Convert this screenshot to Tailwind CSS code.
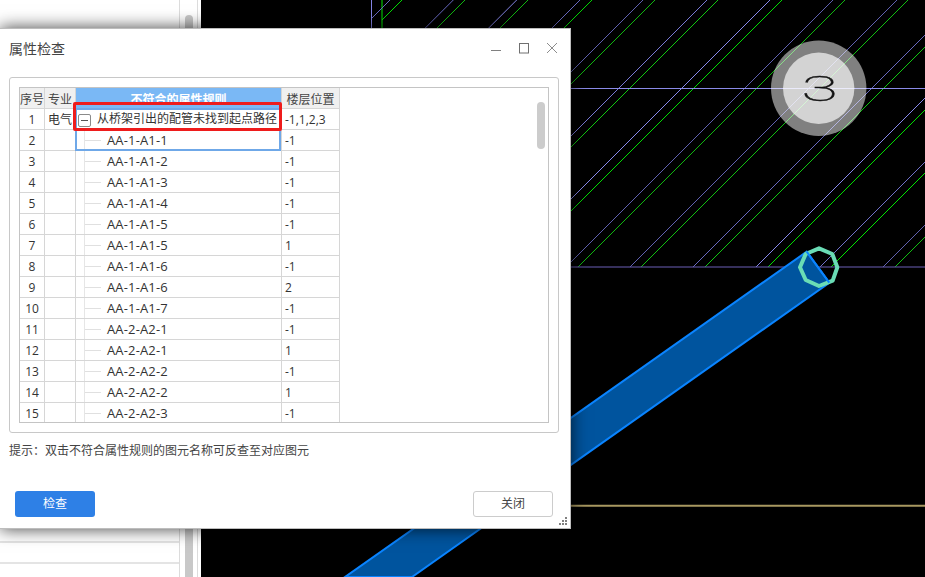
<!DOCTYPE html>
<html lang="zh">
<head>
<meta charset="utf-8">
<script src="https://cdn.jsdelivr.net/npm/@tailwindcss/browser@4"></script>
</head>
<body class="w-[925px] h-[577px] overflow-hidden bg-white relative font-['Open_Sans','Noto_Sans_CJK_SC',sans-serif] text-[12px] text-[#333]">
<!-- application behind the dialog -->
<div class="flex w-full h-full">
  <div class="w-[201px] h-full flex bg-white">
    <div class="w-[180px] h-full border-r border-[#dcdcdc] flex flex-col justify-end">
      <div class="h-[21px] border-b-2 border-[#e4e4e4]"></div>
      <div class="h-[21px] border-b-2 border-[#e4e4e4]"></div>
      <div class="h-[13px]"></div>
    </div>
    <div class="w-[5px]"></div>
    <div class="w-[8px] h-full flex flex-col pt-[15px] bg-white">
      <div class="flex-1 bg-[#c8c8c8] rounded-t-[4px]"></div>
    </div>
    <div class="w-[4px]"></div>
    <div class="w-[1px] h-full bg-[#dcdcdc]"></div>
    <div class="w-[3px]"></div>
  </div>
  <div class="flex-1 h-full bg-black">
    <svg width="724" height="577" viewBox="201 0 724 577" class="block">
      <line x1="371.5" y1="0" x2="371.5" y2="30" stroke="#8484e4"/>
      <line x1="382" y1="0" x2="382" y2="30" stroke="#00e800"/>
      <g fill="none" stroke-width="1">
        <line x1="390" y1="0" x2="372" y2="18" stroke="#6868c0"/>
        <line x1="453.3" y1="0" x2="400" y2="53.3" stroke="#6868c0"/>
        <line x1="516.7" y1="0" x2="430" y2="86.7" stroke="#8484e4"/>
        <line x1="580" y1="0" x2="430" y2="150" stroke="#6868c0"/>
        <line x1="643" y1="0" x2="430" y2="213" stroke="#6060b0"/>
        <line x1="707" y1="0" x2="440" y2="267" stroke="#7878d4"/>
        <line x1="770" y1="0" x2="503" y2="267" stroke="#8888ec"/>
        <line x1="833" y1="0" x2="566" y2="267" stroke="#6060b0"/>
        <line x1="897" y1="0" x2="630" y2="267" stroke="#6060b0"/>
        <line x1="960" y1="0" x2="693" y2="267" stroke="#6868c0"/>
        <line x1="1023" y1="0" x2="756" y2="267" stroke="#8888ec"/>
        <line x1="1087" y1="0" x2="820" y2="267" stroke="#7070c8"/>
        <line x1="1150" y1="0" x2="883" y2="267" stroke="#6060b0"/>
        <line x1="402" y1="0" x2="382" y2="20" stroke="#00e000"/>
        <line x1="465" y1="0" x2="410" y2="55" stroke="#10b810"/>
        <line x1="528" y1="0" x2="430" y2="98" stroke="#10b810"/>
        <line x1="592" y1="0" x2="430" y2="162" stroke="#00d800"/>
        <line x1="655" y1="0" x2="430" y2="225" stroke="#10b810"/>
        <line x1="718" y1="0" x2="451" y2="267" stroke="#10c810"/>
        <line x1="782" y1="0" x2="515" y2="267" stroke="#00e000"/>
        <line x1="845" y1="0" x2="578" y2="267" stroke="#10b810"/>
        <line x1="908" y1="0" x2="641" y2="267" stroke="#10c010"/>
        <line x1="972" y1="0" x2="705" y2="267" stroke="#10c810"/>
        <line x1="1035" y1="0" x2="768" y2="267" stroke="#00e000"/>
        <line x1="1098" y1="0" x2="831" y2="267" stroke="#00e800"/>
        <line x1="1162" y1="0" x2="895" y2="267" stroke="#10c010"/>
      </g>
      <line x1="372" y1="88.5" x2="925" y2="88.5" stroke="#8a8ae8"/>
      <line x1="372" y1="267" x2="925" y2="267" stroke="#6a5fb5"/>
      <line x1="520" y1="505.8" x2="925" y2="505.8" stroke="#a89860" stroke-width="2"/>
      <polygon points="806.7,251.7 829.3,282.7 412,577 345,577" fill="#00549e" stroke="#0a84ff" stroke-width="2"/>
      <polygon points="819,248.3 832.3,254 837.3,267.3 832.7,280.7 819,286 805.7,280 800,267.3 805.7,254" fill="none" stroke="#6adcb5" stroke-width="4" stroke-linejoin="round"/>
      <line x1="806.7" y1="251.7" x2="829.3" y2="282.7" stroke="#0a84ff" stroke-width="2"/>
      <circle cx="818.7" cy="88.3" r="47.7" fill="#ffffff" fill-opacity="0.5"/>
      <circle cx="818.7" cy="88.3" r="35.7" fill="#ffffff" fill-opacity="0.65"/>
      <text x="0" y="0" transform="translate(801.5 100.5) scale(1.9 1)" font-family="Roboto" font-weight="100" font-size="35" fill="#111" stroke="#111" stroke-width="0.45">3</text>
    </svg>
  </div>
</div>

<!-- dialog window -->
<div class="absolute left-0 top-[28px] w-[571px] h-[501px] flex flex-col bg-white border-t border-r border-b border-[#bdbdbd] shadow-[0_0_16px_rgba(0,0,0,0.75)]">
  <div class="h-[48px] shrink-0 flex items-center pl-[9px] pr-[13px] pb-[10px]">
    <span class="text-[14px] leading-[20px] text-[#444] font-['Noto_Sans_CJK_SC',sans-serif]">属性检查</span>
    <div class="ml-auto flex items-center gap-[18px]">
      <svg width="10" height="12" viewBox="0 0 10 12"><line x1="0" y1="8.5" x2="10" y2="8.5" stroke="#808080"/></svg>
      <svg width="10" height="11" viewBox="0 0 10 11"><rect x="0.5" y="0.5" width="9" height="9.5" fill="none" stroke="#707070"/></svg>
      <svg width="10" height="12" viewBox="0 0 10 12"><path d="M0 1 L10 11 M10 1 L0 11" fill="none" stroke="#8c8c8c"/></svg>
    </div>
  </div>
  <div class="ml-[9px] mr-[11px] h-[356px] shrink-0 border border-[#c8c8c8] rounded-[3px] p-[9px] flex">
    <div class="flex-1 border border-[#c4c4c4] relative overflow-hidden">
      <div class="grid grid-cols-[25px_31px_206px_58px] w-max bg-[#f0f0f0] [&>div]:h-[21px] [&>div]:border-r [&>div]:border-b [&>div]:border-[#d6d6d6] [&>div]:text-center [&>div]:whitespace-nowrap [&>div]:leading-[23px] text-[#444]">
        <div>序号</div><div>专业</div><div class="bg-[#7ab8f5] text-white font-bold">不符合的属性规则</div><div>楼层位置</div>
      </div>
      <div class="grid grid-cols-[25px_31px_206px_58px] auto-rows-[21px] w-max leading-[22px] [&>div]:border-r [&>div]:border-b [&>div]:border-[#d6d6d6] [&>div]:whitespace-nowrap">
        <div class="text-center">1</div><div class="text-center">电气</div>
        <div class="flex items-center pl-[2px]"><span class="w-[13px] h-[13px] mt-[2px] border border-[#8a8a8a] rounded-[2px] flex items-center justify-center shrink-0"><span class="w-[7px] h-[1px] bg-[#555]"></span></span><span class="ml-[6px] text-[#333]">从桥架引出的配管未找到起点路径</span></div><div class="pl-[3px]">-1,1,2,3</div>

        <div class="text-center">2</div><div></div><div class="flex items-center pl-[8px]"><span class="w-[1px] self-stretch bg-[#e6e6e6]"></span><span class="w-[16px] h-[1px] bg-[#e0e0e0]"></span><span class="ml-[6px] text-[13px] tracking-[0.15px]">AA-1-A1-1</span></div><div class="pl-[3px]">-1</div>
        <div class="text-center">3</div><div></div><div class="flex items-center pl-[8px]"><span class="w-[1px] self-stretch bg-[#e6e6e6]"></span><span class="w-[16px] h-[1px] bg-[#e0e0e0]"></span><span class="ml-[6px] text-[13px] tracking-[0.15px]">AA-1-A1-2</span></div><div class="pl-[3px]">-1</div>
        <div class="text-center">4</div><div></div><div class="flex items-center pl-[8px]"><span class="w-[1px] self-stretch bg-[#e6e6e6]"></span><span class="w-[16px] h-[1px] bg-[#e0e0e0]"></span><span class="ml-[6px] text-[13px] tracking-[0.15px]">AA-1-A1-3</span></div><div class="pl-[3px]">-1</div>
        <div class="text-center">5</div><div></div><div class="flex items-center pl-[8px]"><span class="w-[1px] self-stretch bg-[#e6e6e6]"></span><span class="w-[16px] h-[1px] bg-[#e0e0e0]"></span><span class="ml-[6px] text-[13px] tracking-[0.15px]">AA-1-A1-4</span></div><div class="pl-[3px]">-1</div>
        <div class="text-center">6</div><div></div><div class="flex items-center pl-[8px]"><span class="w-[1px] self-stretch bg-[#e6e6e6]"></span><span class="w-[16px] h-[1px] bg-[#e0e0e0]"></span><span class="ml-[6px] text-[13px] tracking-[0.15px]">AA-1-A1-5</span></div><div class="pl-[3px]">-1</div>
        <div class="text-center">7</div><div></div><div class="flex items-center pl-[8px]"><span class="w-[1px] self-stretch bg-[#e6e6e6]"></span><span class="w-[16px] h-[1px] bg-[#e0e0e0]"></span><span class="ml-[6px] text-[13px] tracking-[0.15px]">AA-1-A1-5</span></div><div class="pl-[3px]">1</div>
        <div class="text-center">8</div><div></div><div class="flex items-center pl-[8px]"><span class="w-[1px] self-stretch bg-[#e6e6e6]"></span><span class="w-[16px] h-[1px] bg-[#e0e0e0]"></span><span class="ml-[6px] text-[13px] tracking-[0.15px]">AA-1-A1-6</span></div><div class="pl-[3px]">-1</div>
        <div class="text-center">9</div><div></div><div class="flex items-center pl-[8px]"><span class="w-[1px] self-stretch bg-[#e6e6e6]"></span><span class="w-[16px] h-[1px] bg-[#e0e0e0]"></span><span class="ml-[6px] text-[13px] tracking-[0.15px]">AA-1-A1-6</span></div><div class="pl-[3px]">2</div>
        <div class="text-center">10</div><div></div><div class="flex items-center pl-[8px]"><span class="w-[1px] self-stretch bg-[#e6e6e6]"></span><span class="w-[16px] h-[1px] bg-[#e0e0e0]"></span><span class="ml-[6px] text-[13px] tracking-[0.15px]">AA-1-A1-7</span></div><div class="pl-[3px]">-1</div>
        <div class="text-center">11</div><div></div><div class="flex items-center pl-[8px]"><span class="w-[1px] self-stretch bg-[#e6e6e6]"></span><span class="w-[16px] h-[1px] bg-[#e0e0e0]"></span><span class="ml-[6px] text-[13px] tracking-[0.15px]">AA-2-A2-1</span></div><div class="pl-[3px]">-1</div>
        <div class="text-center">12</div><div></div><div class="flex items-center pl-[8px]"><span class="w-[1px] self-stretch bg-[#e6e6e6]"></span><span class="w-[16px] h-[1px] bg-[#e0e0e0]"></span><span class="ml-[6px] text-[13px] tracking-[0.15px]">AA-2-A2-1</span></div><div class="pl-[3px]">1</div>
        <div class="text-center">13</div><div></div><div class="flex items-center pl-[8px]"><span class="w-[1px] self-stretch bg-[#e6e6e6]"></span><span class="w-[16px] h-[1px] bg-[#e0e0e0]"></span><span class="ml-[6px] text-[13px] tracking-[0.15px]">AA-2-A2-2</span></div><div class="pl-[3px]">-1</div>
        <div class="text-center">14</div><div></div><div class="flex items-center pl-[8px]"><span class="w-[1px] self-stretch bg-[#e6e6e6]"></span><span class="w-[16px] h-[1px] bg-[#e0e0e0]"></span><span class="ml-[6px] text-[13px] tracking-[0.15px]">AA-2-A2-2</span></div><div class="pl-[3px]">1</div>
        <div class="text-center">15</div><div></div><div class="flex items-center pl-[8px]"><span class="w-[1px] self-stretch bg-[#e6e6e6]"></span><span class="w-[16px] h-[1px] bg-[#e0e0e0]"></span><span class="ml-[6px] text-[13px] tracking-[0.15px]">AA-2-A2-3</span></div><div class="pl-[3px]">-1</div>
      </div>
      <!-- selection, annotation and scrollbar lie over the table -->
      <div class="absolute left-[55px] top-[20px] w-[206px] h-[43px] border-2 border-[#6fa8e8]"></div>
      <div class="absolute left-[53px] top-[14px] w-[209px] h-[29px] border-[3px] border-[#ee1c1c] rounded-[2px] bg-transparent"></div>
      <div class="absolute left-[517px] top-[14px] w-[8px] h-[47px] bg-[#cccccc] rounded-[4px]"></div>
    </div>
  </div>
  <div class="h-[34px] shrink-0 flex items-center pl-[9px] text-[#444]"><span>提示<span class="font-['Noto_Sans_CJK_TC',sans-serif]">：</span>双击不符合属性规则的图元名称可反查至对应图元</span></div>
  <div class="mt-auto mb-[11px] flex justify-between pl-[15px] pr-[17px]">
    <div class="w-[80px] h-[26px] rounded-[3px] bg-[#2e80e6] text-white flex items-center justify-center">检查</div>
    <div class="w-[80px] h-[26px] rounded-[3px] border border-[#cccccc] bg-white text-[#444] flex items-center justify-center">关闭</div>
  </div>
  <div class="absolute right-[3px] bottom-[3px] w-[8px] h-[8px] grid grid-cols-3 gap-[1px]">
    <span></span><span></span><span class="bg-[#808080]"></span>
    <span></span><span class="bg-[#808080]"></span><span class="bg-[#808080]"></span>
    <span class="bg-[#808080]"></span><span class="bg-[#808080]"></span><span class="bg-[#808080]"></span>
  </div>
</div>
</body>
</html>
